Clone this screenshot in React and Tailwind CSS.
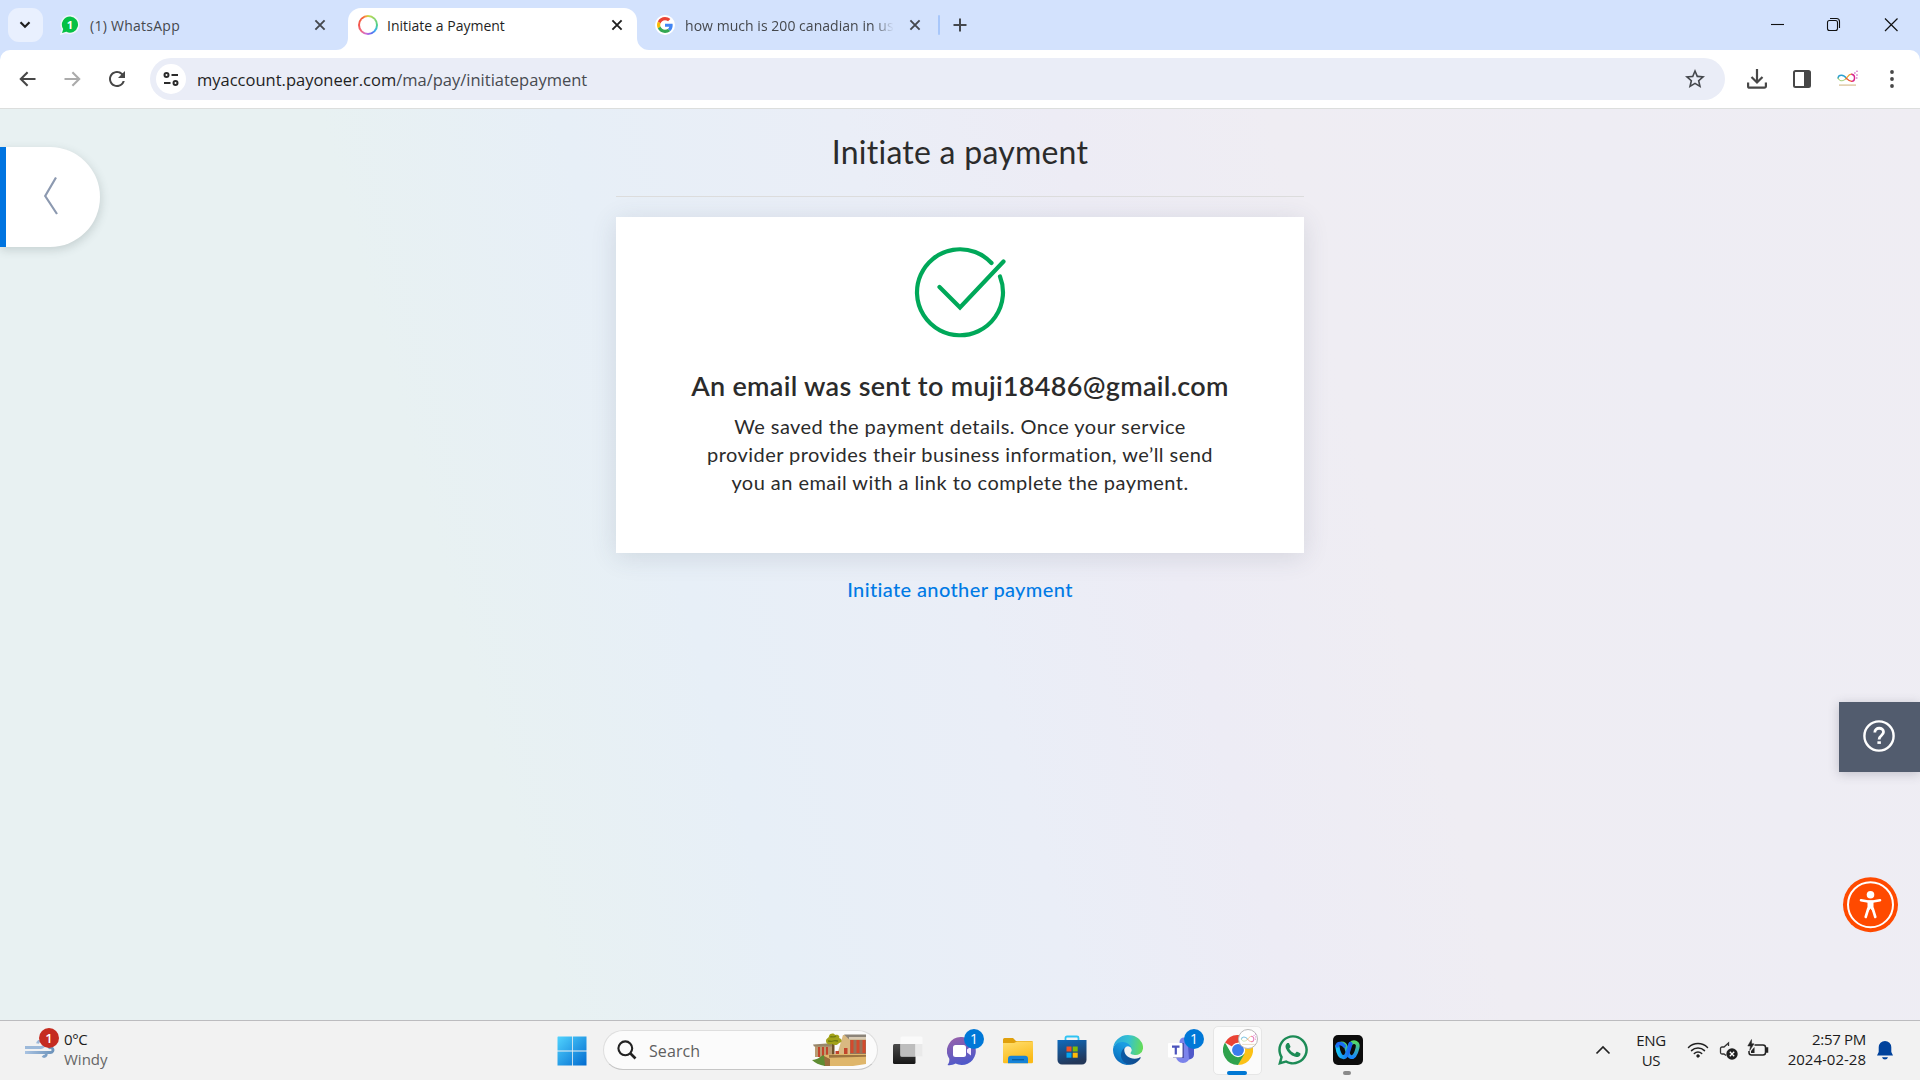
import React from "react";
import { MdRefresh, MdStarBorder } from "react-icons/md";
import { FaWhatsapp } from "react-icons/fa";

function CloseIcon({ className }) {
  return (
    <svg viewBox="0 0 12 12" className={"h-3 w-3 shrink-0 " + className} fill="none" stroke="currentColor" strokeWidth="1.900">
      <path d="M1.400 1.400 10.600 10.600M10.600 1.400 1.400 10.600" />
    </svg>
  );
}

function GoogleG({ className }) {
  return (
    <svg viewBox="0 0 48 48" className={className}>
      <path fill="#ea4335" d="M24 9.5c3.5 0 6.700 1.200 9.200 3.600l6.900-6.900C35.900 2.400 30.500 0 24 0 14.600 0 6.500 5.400 2.600 13.200l8 6.200C12.400 13.700 17.700 9.500 24 9.500z" />
      <path fill="#4285f4" d="M47 24.500c0-1.600-.2-3.100-.4-4.500H24v9h12.900c-.6 3-2.300 5.500-4.800 7.200l7.700 6C44.400 38 47 31.800 47 24.500z" />
      <path fill="#fbbc05" d="M10.500 28.600c-.5-1.500-.8-3-.8-4.600s.3-3.100.8-4.600l-8-6.200C.9 16.500 0 20.100 0 24s.9 7.500 2.600 10.800z" />
      <path fill="#34a853" d="M24 48c6.500 0 11.900-2.100 15.900-5.800l-7.700-6c-2.200 1.500-4.900 2.300-8.200 2.300-6.300 0-11.600-4.200-13.500-9.900l-8 6.200C6.500 42.600 14.600 48 24 48z" />
    </svg>
  );
}

function InfinityMark({ className }) {
  return (
    <svg viewBox="0 0 24 18" className={className} fill="none" strokeLinecap="round">
      <path d="M11 9C8 4.500 2.500 4.500 2 8.500" stroke="#2a9fd0" strokeWidth="1.500" />
      <path d="M2 8.500c1 4 5.500 3.500 8 1" stroke="#8fc45a" strokeWidth="1" />
      <path d="M10 9.500c2-2 3.500-5.500 6.500-5" stroke="#f0a030" strokeWidth="1.300" />
      <path d="M16.500 4.500c4.500 1 3.500 7.500 0 7.500" stroke="#d8248e" strokeWidth="1.500" />
      <path d="M16.500 12C14 12 13 11 11 9" stroke="#ee5535" strokeWidth="1.200" />
      <path d="M19.800 3.200h.1M22 1.400h.1M22 5.300h.1M21.800 8.500h.1" stroke="#c94bb8" strokeWidth="1.500" />
      <path d="M3 16h18" stroke="#dfcca8" strokeWidth="1.600" strokeLinecap="butt" />
    </svg>
  );
}

function TabStrip() {
  return (
    <div className="flex h-[50px] w-full bg-[#d3e2fd] text-sm leading-5 text-[#45484d]">
      <div className="mt-2 ml-2 flex h-[34px] w-[35px] items-center justify-center rounded-[11px] bg-[#e9f0fe] text-[#1f1f1f]">
        <svg viewBox="0 0 12 8" className="mr-px h-2 w-3" fill="none" stroke="currentColor" strokeWidth="2.200">
          <path d="m1.500 1.300 4.500 4.500 4.500-4.500" />
        </svg>
      </div>
      <div className="flex h-[50px] w-[305px] items-center pl-[17px]">
        <div className="relative flex h-5 w-5 items-center justify-center text-[11px] font-bold text-white">
          <svg viewBox="0 0 20 20" className="absolute inset-0 h-5 w-5">
            <path d="M10.300.8a8.800 8.800 0 1 1-4.200 16.700L.9 19.200l1.500-5A8.900 8.900 0 0 1 10.300.8z" fill="#05c144" stroke="#eef6fb" strokeWidth="1.500" />
          </svg>
          <span className="relative leading-5">1</span>
        </div>
        <span className="mt-px ml-[10px] w-[224px] tracking-[0.26px]">(1) WhatsApp</span>
        <CloseIcon className="text-[#45484d]" />
      </div>
      <div className="relative mt-2 flex h-[42px] w-[289px] items-center rounded-t-[13px] bg-white pl-[10px] text-[#1f1f1f]">
        <svg viewBox="0 0 12 12" className="absolute bottom-0 -left-3 h-3 w-3" fill="#fff"><path d="M12 0v12H0A12 12 0 0 0 12 0z" /></svg>
        <svg viewBox="0 0 12 12" className="absolute -right-3 bottom-0 h-3 w-3" fill="#fff"><path d="M0 0v12h12A12 12 0 0 1 0 0z" /></svg>
        <div className="-mt-2 h-5 w-5 shrink-0 rounded-full bg-[conic-gradient(#c9d94a,#4fd08c_25%,#3bb0f0_35%,#5a6cf0_43%,#c66be0_52%,#ef6a86_63%,#f4564d_75%,#f5603a_90%,#f5a33c_97%,#c9d94a)] p-[2px]">
          <div className="h-4 w-4 rounded-full bg-white" />
        </div>
        <span className="-mt-[7px] ml-[9px] w-[224px]">Initiate a Payment</span>
        <CloseIcon className="-mt-2" />
      </div>
      <div className="flex h-[50px] w-[303px] items-center pl-[18px]">
        <div className="flex h-5 w-5 shrink-0 items-center justify-center rounded-full bg-white">
          <GoogleG className="h-4 w-4" />
        </div>
        <span className="mt-px ml-[10px] w-[210px] overflow-hidden mask-r-from-90% mask-r-to-100% tracking-[0.04px] whitespace-nowrap">how much is 200 canadian in us</span>
        <CloseIcon className="ml-[15px]" />
        <div className="ml-[17px] h-5 w-[2px] shrink-0 rounded bg-[#a8c7fa]" />
      </div>
      <div className="flex h-[50px] flex-1 items-center pl-[13px]">
        <svg viewBox="0 0 14 14" className="h-[14px] w-[14px]" fill="none" stroke="currentColor" strokeWidth="2"><path d="M7 .5v13M.5 7h13" /></svg>
      </div>
      <svg viewBox="0 0 150 50" className="h-[50px] w-[150px]" fill="none" stroke="#111" strokeWidth="1">
        <path d="M1 24.500h13" strokeWidth="1.100" />
        <rect x="57.500" y="20.500" width="10" height="10" rx="2" strokeWidth="1.100" />
        <path d="M60 18.500h6.500a3 3 0 0 1 3 3V28" strokeWidth="1.100" />
        <path d="m115 18.500 12.500 12.500M127.500 18.500 115 31" strokeWidth="1.200" />
      </svg>
    </div>
  );
}

function Toolbar() {
  return (
    <div className="w-full bg-[#d3e2fd]">
      <div className="flex h-[59px] w-full rounded-t-[10px] border-b border-[#dcdedd] bg-white">
        <div className="flex h-[58px] w-[150px] items-center pl-[19px]">
          <svg viewBox="0 0 18 18" className="h-[18px] w-[18px]" fill="none" stroke="#474747" strokeWidth="2.100"><path d="M16.500 9H2.200M8.600 2.200 1.800 9l6.800 6.800" /></svg>
          <svg viewBox="0 0 18 18" className="ml-[26px] h-[18px] w-[18px]" fill="none" stroke="#ababab" strokeWidth="2.100"><path d="M1.500 9h14.300M9.400 2.200 16.200 9l-6.800 6.800" /></svg>
          <MdRefresh className="ml-[24px] h-6 w-6 text-[#474747]" />
        </div>
        <div className="mt-2 flex h-[42px] w-[1575px] items-center rounded-full bg-[#eaedf7] pl-[6px]">
          <div className="flex h-[30px] w-[30px] items-center justify-center rounded-full bg-white">
            <svg viewBox="0 0 18 14" className="h-[14px] w-[18px]" fill="none" stroke="#2b2b2b" strokeWidth="2">
              <circle cx="4.500" cy="3" r="2" /><path d="M9.500 3H16M2 11h6.500" /><circle cx="13.500" cy="11" r="2" />
            </svg>
          </div>
          <div className="mt-px ml-[11px] flex-1 text-[16.500px] leading-6 text-[#1f1f1f]">myaccount.payoneer.com<span className="text-[#474a50]">/ma/pay/initiatepayment</span></div>
          <MdStarBorder className="mr-[18px] h-6 w-6 text-[#45484d]" />
        </div>
        <div className="flex h-[58px] flex-1 items-center pl-[22px]">
          <svg viewBox="0 0 20 20" className="h-5 w-5" fill="none" stroke="#474747" strokeWidth="2.200"><path d="M10 0v13M4.500 8l5.500 5.500L15.500 8M1.100 13.500v3.700a1.500 1.500 0 0 0 1.500 1.500h14.800a1.500 1.500 0 0 0 1.500-1.500v-3.700" /></svg>
          <svg viewBox="0 0 18 18" className="ml-[26px] h-[18px] w-[18px]"><rect x="1" y="1" width="16" height="16" rx="1.500" fill="none" stroke="#474747" strokeWidth="2" /><path d="M11 1h6v16h-6z" fill="#474747" /></svg>
          <InfinityMark className="mt-[-2px] ml-[25px] h-[17px] w-[23px]" />
          <svg viewBox="0 0 4 18" className="ml-[31px] h-[18px] w-1" fill="#474747"><circle cx="2" cy="2" r="1.900" /><circle cx="2" cy="9" r="1.900" /><circle cx="2" cy="16" r="1.900" /></svg>
        </div>
      </div>
    </div>
  );
}

function PaymentPage() {
  return (
    <main className="relative flex h-[911px] w-full flex-col items-center bg-[linear-gradient(75deg,#e8f1f2_0%,#e8f1f2_26%,#e7eff7_37%,#eaeef7_50%,#edecf5_60%,#efedf3_70%,#eeedf4_85%,#efedf3_100%)] font-['Lato',sans-serif] text-[#2b2b2b]">
      <h1 className="mt-[23px] h-10 text-[32px] leading-10 tracking-[0.25px]">Initiate a payment</h1>
      <div className="mt-[24px] h-px w-[688px] bg-[#dcdcdc]" />
      <section className="mt-5 flex h-[336px] w-[688px] flex-col items-center bg-white pt-[30px] text-center shadow-[0_4px_24px_rgba(60,70,90,0.14)]">
        <svg viewBox="914 246 92 92" className="h-[92px] w-[92px]" fill="none" stroke="#00a859" strokeWidth="4.200" strokeLinecap="round">
          <path d="M991.500 262A43 43 0 1 0 1000 275.500" />
          <path d="M939.500 286 960 306.500 1003.500 260.500" />
        </svg>
        <h2 className="mt-[30px] h-[34px] text-[27px] leading-[34px] font-semibold tracking-[0.31px] whitespace-nowrap">An email was sent to muji18486@gmail.com</h2>
        <p className="mt-[9px] text-xl leading-7 tracking-[0.45px] whitespace-nowrap">
          We saved the payment details. Once your service<br />provider provides their business information, we’ll send<br />you an email with a link to complete the payment.
        </p>
      </section>
      <a className="mt-[22px] text-xl leading-7 font-medium tracking-[0.38px] text-[#007ae5]">Initiate another payment</a>

      <div className="absolute top-[38px] left-0 flex h-[100px] w-[100px] items-center rounded-r-full border-l-[6px] border-[#0074e0] bg-white pl-[37px] shadow-[1px_3px_10px_rgba(60,80,80,0.2)]">
        <svg viewBox="0 0 16 40" className="-mt-0.5 h-10 w-4" fill="none" stroke="#8c99b0" strokeWidth="2.200"><path d="M13 1.500 2.200 20 14 38" /></svg>
      </div>
      <div className="absolute top-[593px] right-0 flex h-[70px] w-[81px] items-center justify-center bg-[#525c6e] pr-px shadow-[0_2px_10px_rgba(60,60,80,0.25)]">
        <svg viewBox="0 0 34 34" className="-mt-[2px] h-[34px] w-[34px]" fill="none" stroke="#fff">
          <circle cx="17" cy="17" r="14.600" strokeWidth="2.400" />
          <path d="M12.800 13.500c0-5.700 8.700-5.500 8.700-.4 0 3.600-4.400 3.200-4.400 7.400" strokeWidth="2.800" />
          <path d="M15.400 22.300h3.500v2.600h-3.500z" fill="#fff" stroke="none" />
        </svg>
      </div>
      <svg viewBox="0 0 56 56" className="absolute top-[768px] left-[1842px] h-14 w-14">
        <circle cx="28.500" cy="27.700" r="27.500" fill="#ff4a00" />
        <circle cx="28.500" cy="27.700" r="22.500" fill="none" stroke="#fff" strokeWidth="2" />
        <circle cx="28.500" cy="17.800" r="3.800" fill="#fff" />
        <path d="M19 23.300l7 1.200h5l7-1.200M26.300 31.500l-2.600 8.500M30.700 31.500l2.600 8.500" stroke="#fff" strokeWidth="2.600" strokeLinecap="round" fill="none" />
        <path d="M25.500 23.600h6v7l-.4 4.400-2.600-3.500-2.600 3.500-.4-4.400z" fill="#fff" />
      </svg>
    </main>
  );
}

function Badge() {
  return (
    <span className="absolute top-[8px] left-[29px] flex h-5 w-5 items-center justify-center rounded-full bg-[#0078d7] text-[14px] text-white">1</span>
  );
}

function Slot({ children, active }) {
  return (
    <div className="relative flex h-[59px] w-[55px] items-center justify-center">
      {active && <div className="absolute top-[5px] left-[3px] h-[49px] w-[49px] rounded-[5px] border border-[#e6e6e6] bg-[#fbfbfb]" />}
      {children}
    </div>
  );
}

function Temple() {
  return (
    <svg viewBox="0 0 56 34" className="h-[34px] w-14">
      <path d="M4 13h17v11H4z" fill="#b99c72" /><path d="M2 11.500 22 10v3.500H3z" fill="#97866a" />
      <path d="M7 14h2v10H7zM11 14h2v10h-2zM15 14h2v10h-2z" fill="#c2452b" />
      <path d="M21 8h2.500v17H21z" fill="#70512a" />
      <path d="M32 2h23v20H26z" fill="#d9b981" /><path d="M33 1.500h22v4.800H38z" fill="#8b8378" /><path d="M38 4h17v2.500H38z" fill="#d8cbb5" />
      <path d="M15 8c0-3 3-3 3-5 1-3 5-3 6-1 4-1 5 2 4 3 4 1 3 5 0 5-2 3-5 2-7 1-3 1-6 0-6-3z" fill="#a2a218" />
      <path d="M17 8c2 0 3 1 5 0s3 0 5 0M19 4c2-1 4 1 6-1" stroke="#6f7b13" strokeWidth="1.300" fill="none" />
      <path d="M39 7h16v14H39z" fill="#97745a" />
      <path d="M39.500 7h3v13h-3zM45.500 7h3v13h-3zM51.500 7h3v13h-3z" fill="#d34a2d" />
      <path d="M33 15h3.500v6H33zM24.500 18H28v4h-3.500z" fill="#c2452b" />
      <path d="M13 22l12-1h30v10l-13 2H13z" fill="#dfb66b" /><path d="M18 22h37v1.800l-37 1z" fill="#9c7440" />
      <path d="M13 33V23l6 3v7z" fill="#9a6c3c" />
      <path d="M1 27c6 0 8-4 12-5l1 11C8 32 4 30 1 27z" fill="#5f8c33" />
    </svg>
  );
}

function Taskbar() {
  return (
    <footer className="flex h-[60px] w-full border-t border-[#bcbcbf] bg-[#f2f2f2] text-[15px] leading-5">
      <div className="flex w-[544px] pl-6">
        <div className="relative mt-[7px] h-9 w-[40px]">
          <svg viewBox="0 0 30 18" className="absolute top-[12px] left-px h-[18px] w-[30px]" fill="none" strokeWidth="2.800">
            <defs><linearGradient id="wind" gradientUnits="userSpaceOnUse" x1="0" y1="0" x2="30" y2="0"><stop stopColor="#a9c3e2" /><stop offset="1" stopColor="#6990b8" /></linearGradient></defs>
            <path d="M0 7.500h16a3.500 3.500 0 1 0-3.500-4" stroke="#9cb9da" />
            <path d="M0 12.500h25.500a2.500 2.500 0 1 0-2-4M15 12.500h4.500a2 2 0 1 1-1.800 3.300" stroke="url(#wind)" />
          </svg>
          <span className="absolute top-0 left-[15px] flex h-5 w-5 items-center justify-center rounded-full bg-[#c52b20] text-[13px] font-semibold text-white">1</span>
        </div>
        <div className="mt-2 text-[#1c1c1c]"><div className="tracking-[-0.4px]">0°C</div><div className="text-[#666]">Windy</div></div>
      </div>
      <Slot>
        <svg viewBox="0 0 30 30" className="h-[30px] w-[30px]">
          <defs><linearGradient id="win" gradientUnits="userSpaceOnUse" x1="0" y1="0" x2="30" y2="30"><stop stopColor="#52d5ff" /><stop offset="1" stopColor="#0069cf" /></linearGradient></defs>
          <path d="M1 .5h14v14H.5V1zM15.800.5H29.500v14H15.800zM.5 15.400H15v14H.5zM15.800 15.400h13.700v14H15.800z" fill="url(#win)" />
        </svg>
      </Slot>
      <div className="mt-[9px] ml-[4px] flex h-10 w-[275px] items-center rounded-full border border-[#dedede] border-b-[#c6c6c6] bg-[#fbfbfb] pl-[13px]">
        <svg viewBox="0 0 20 20" className="h-5 w-5" fill="none" stroke="#222" strokeWidth="2.100"><circle cx="8.300" cy="8.300" r="6.900" /><path d="m13 13 5.500 5.500" strokeWidth="2.600" /></svg>
        <span className="mt-px ml-[12px] flex-1 text-base leading-6 tracking-[0.1px] text-[#5f5f5f]">Search</span>
        <Temple />
        <div className="w-[10px]" />
      </div>
      <div className="flex pl-[2px]">
        <Slot>
          <svg viewBox="0 0 30 30" className="h-[30px] w-[30px]">
            <defs><linearGradient id="tv" y2="1" x2="0"><stop stopColor="#4b4b4b" /><stop offset="1" stopColor="#171717" /></linearGradient></defs>
            <rect x="0" y="8" width="22.500" height="20" rx="1.500" fill="url(#tv)" />
            <rect x="7.500" y=".5" width="22" height="20" rx="1.500" fill="#fafafa" /><path d="M7.500 8h15v12.500h-15z" fill="#bdbdbd" />
            <path d="M22.500 8h7v12.500h-7z" fill="#e9e9e9" />
          </svg>
        </Slot>
        <Slot>
          <svg viewBox="0 0 30 30" className="-ml-px h-[30px] w-[30px]">
            <defs><linearGradient id="chat" y2="1" x2=".3"><stop stopColor="#9b61a8" /><stop offset="1" stopColor="#5059c9" /></linearGradient></defs>
            <path d="M15 1a14 14 0 1 1-6.500 26.500C6 29 3 29.500.5 29c1.500-2 2-4 1.800-6.300A14 14 0 0 1 15 1z" fill="url(#chat)" />
            <rect x="6" y="9" width="13" height="12" rx="2.500" fill="#fff" /><path d="m20 13.500 4-3v9l-4-3z" fill="#f3e8ff" />
          </svg>
          <Badge />
        </Slot>
        <Slot>
          <svg viewBox="0 0 30 30" className="-mt-px h-[30px] w-[30px]">
            <defs><linearGradient id="fold" y2="1" x2=".4"><stop stopColor="#ffdf70" /><stop offset="1" stopColor="#fbba17" /></linearGradient></defs>
            <path d="M0 4.500A1.500 1.500 0 0 1 1.500 3H10l3 3h15.500A1.500 1.500 0 0 1 30 7.500V12H0z" fill="#e0a00c" />
            <path d="M0 8h11l3-1.500h16V27a1.300 1.300 0 0 1-1.300 1.300H1.300A1.300 1.300 0 0 1 0 27z" fill="url(#fold)" />
            <path d="M5 28.300v-4.500a3 3 0 0 1 3-3h14a3 3 0 0 1 3 3v4.500z" fill="#1683d8" /><path d="M9 24.700h12" stroke="#075d9f" strokeWidth="1.300" />
          </svg>
        </Slot>
        <Slot>
          <svg viewBox="0 0 30 30" className="-mt-px -ml-px h-[30px] w-[30px]">
            <defs><linearGradient id="store" y2="1" x2=".3"><stop stopColor="#0f6bbd" /><stop offset="1" stopColor="#233759" /></linearGradient></defs>
            <path d="M8.500 7V3a1.500 1.500 0 0 1 1.500-1.500h10A1.500 1.500 0 0 1 21.500 3v4" fill="none" stroke="#2fc3f3" strokeWidth="1.800" />
            <path d="M.5 5h29v20a4.500 4.500 0 0 1-4.500 4.500H5A4.500 4.500 0 0 1 .5 25z" fill="url(#store)" />
            <path d="M9.500 11.500h5v5h-5z" fill="#f35325" /><path d="M15.700 11.500h5v5h-5z" fill="#81bc06" /><path d="M9.500 17.700h5v5h-5z" fill="#05a6f0" /><path d="M15.700 17.700h5v5h-5z" fill="#ffba08" />
          </svg>
        </Slot>
        <Slot>
          <svg viewBox="0 0 256 256" className="-mt-px h-[30px] w-[30px]">
            <defs>
              <linearGradient id="e1" x1=".1" y1=".7" x2="1" y2=".7"><stop stopColor="#0c59a4" /><stop offset="1" stopColor="#114a8b" /></linearGradient>
              <linearGradient id="e2" x1=".6" y1=".2" x2=".2" y2="1"><stop stopColor="#1b9de2" /><stop offset=".6" stopColor="#0e7dc9" /><stop offset="1" stopColor="#0b5bb0" /></linearGradient>
              <linearGradient id="e3" x1="0" y1=".4" x2="1" y2=".5"><stop stopColor="#2aa7dc" /><stop offset=".5" stopColor="#35c1d2" /><stop offset="1" stopColor="#66dd55" /></linearGradient>
            </defs>
            <path fill="url(#e1)" d="M231 190.500c-3.400 1.800-6.900 3.400-10.500 4.700a101 101 0 0 1-35.900 6.400c-47.300 0-88.500-32.500-88.500-74.300.1-11.400 6.400-21.800 16.400-27.300-42.800 1.800-53.800 46.400-53.800 72.500 0 73.900 68.100 81.400 82.800 81.400 7.900 0 19.800-2.300 27-4.600l1.300-.4a128 128 0 0 0 66.600-52.800 4 4 0 0 0-5.400-5.600z" />
            <path fill="url(#e2)" d="M105.700 241.400a79 79 0 0 1-22.700-21.300 80.700 80.700 0 0 1 29.500-120.100c3.200-1.500 8.400-4.100 15.500-4a32 32 0 0 1 25.700 13 31.900 31.900 0 0 1 6.300 18.700c0-.2 24.500-79.600-80-79.600-43.900 0-80 41.700-80 78.200-.2 19.300 4 38.400 12.100 56a128 128 0 0 0 156.400 67.100 75.600 75.600 0 0 1-62.800-8z" />
            <path fill="url(#e3)" d="M152.300 148.900c-.9 1-3.400 2.500-3.400 5.600 0 2.600 1.700 5.200 4.800 7.300 14.400 10.100 41.700 8.700 41.800 8.700 10.700 0 21.200-2.900 30.500-8.400a61.900 61.900 0 0 0 30.400-53.300c.3-22.400-8-37.300-11.300-43.900C223.900 23.300 177.700 0 127.400 0A128 128 0 0 0 0 126.200c.5-36.500 36.800-66 80-66 3.500 0 23.500.3 42 10.100 16.300 8.600 24.900 18.900 30.800 29.200 6.200 10.700 7.300 24.100 7.300 29.500s-2.700 13.300-7.800 19.900z" />
          </svg>
        </Slot>
        <Slot>
          <svg viewBox="0 0 30 30" className="-mt-[2px] h-[30px] w-[30px]">
            <circle cx="16" cy="7" r="4.500" fill="#7b83eb" /><path d="M8 11h14v10a7 7 0 0 1-14 0z" fill="#7b83eb" /><path d="M20 11h6v8.500a5 5 0 0 1-5 5z" fill="#5059c9" />
            <path d="M5 8h11v15H5z" fill="#3e3f8a" opacity=".7" /><rect x="0" y="8" width="14.500" height="14.500" rx="1" fill="#fff" />
            <path d="M4 11.700h7.500M7.800 11.500v8" stroke="#4b53bc" strokeWidth="2.200" />
          </svg>
          <Badge />
        </Slot>
        <Slot active>
          <svg viewBox="0 0 48 48" className="relative -mt-px h-[30px] w-[30px]">
            <path d="M24 24 3.200 12A24 24 0 0 1 44.800 12H24z" fill="#ea4335" />
            <path d="M24 24h10.400L24 48A24 24 0 0 0 44.800 12H24z" fill="#fbc116" />
            <path d="M3.200 12A24 24 0 0 0 24 48l10.400-18L24 24l-10.400 6z" fill="#2fa24c" />
            <circle cx="24" cy="24" r="11.500" fill="#fff" /><circle cx="24" cy="24" r="9.500" fill="#3b7ded" />
          </svg>
          <div className="absolute top-[8px] left-[28px] flex h-5 w-5 items-center justify-center rounded-full border border-[#b9b9b9] bg-white"><InfinityMark className="h-[13px] w-[17px] opacity-60" /></div>
          <div className="absolute bottom-[5px] left-[17px] h-1 w-5 rounded-full bg-[#0078d4]" />
        </Slot>
        <Slot><FaWhatsapp className="-mt-px h-[34px] w-[34px] text-[#1c8b56]" /></Slot>
        <Slot>
          <svg viewBox="0 0 30 30" className="-mt-px h-[30px] w-[30px]" fill="none" strokeLinecap="round">
            <defs><linearGradient id="wx1" x2="1"><stop stopColor="#16c4f5" /><stop offset="1" stopColor="#1a5df2" /></linearGradient><linearGradient id="wx2" y2="1" x2="0"><stop stopColor="#53d769" /><stop offset="1" stopColor="#1787ff" /></linearGradient></defs>
            <rect width="30" height="30" rx="5" fill="#0c0c0c" />
            <path d="M17.500 9c3.500-3.500 8.500-1.500 7 4-1.300 5.500-3.500 9.500-6.500 9.200-3-.4-3.500-5.700-5-10.200-.8-2.500-3-3.500-4.500-3.500" stroke="url(#wx2)" strokeWidth="3.800" />
            <path d="M4.300 11c.7 6 3 11.200 6.200 11.200 3.800 0 4.700-7 7-13.200" stroke="url(#wx1)" strokeWidth="4.200" />
            <path d="M4.300 11c.2-3.500 5-3 7 0" stroke="#1b6cf5" strokeWidth="3.400" />
          </svg>
          <div className="absolute bottom-[5px] left-[23px] h-1 w-2 rounded-full bg-[#8a8a8a]" />
        </Slot>
      </div>
      <div className="flex flex-1 justify-end text-[#1c1c1c]">
        <svg viewBox="0 0 16 10" className="mt-[24px] h-[10px] w-4" fill="none" stroke="#222" strokeWidth="1.700"><path d="m1.500 8.500 6.500-6.500 6.500 6.500" /></svg>
        <div className="mt-[9px] ml-[21px] w-[38px] text-center tracking-[-0.4px]"><div>ENG</div><div>US</div></div>
        <svg viewBox="0 0 22 18" className="mt-[20px] ml-[17px] h-[18px] w-[22px]" fill="none" stroke="#222" strokeWidth="1.500" strokeLinecap="round">
          <path d="M1.500 6.500a13.500 13.500 0 0 1 19 0M4.500 9.600a9.300 9.300 0 0 1 13 0M7.300 12.500a5.300 5.300 0 0 1 7.400 0" /><circle cx="11" cy="15" r="1.400" fill="#222" strokeWidth=".5" />
        </svg>
        <svg viewBox="0 0 20 20" className="mt-[20px] ml-[10px] h-5 w-5" fill="none" stroke="#333" strokeWidth="1.300">
          <path d="M9.500 5V2L5 6H3a1.500 1.500 0 0 0-1.500 1.500v4A1.500 1.500 0 0 0 3 13h2l2 1.500" /><circle cx="13" cy="13" r="5.700" fill="#1f1f1f" stroke="none" /><path d="m10.800 10.800 4.400 4.400M15.200 10.800l-4.400 4.400" stroke="#fff" />
        </svg>
        <svg viewBox="0 0 22 18" className="mt-[18px] ml-[8px] h-[18px] w-[22px]" fill="none" stroke="#222" strokeWidth="1.500">
          <path d="M7.500 6H16a2.500 2.500 0 0 1 2.500 2.500v5A2.500 2.500 0 0 1 16 16H4.500A2.500 2.500 0 0 1 2 13.500V12" /><path d="M19 9h1.500v4H19z" fill="#222" stroke="#222" /><path d="M4.500.5.800 7h2.700L2.700 11.500 7 4.800H4.600z" fill="#222" strokeWidth=".5" /><path d="M4 14V12l3.500-4v6z" fill="#222" stroke="none" />
        </svg>
        <div className="mt-2 ml-[15px] w-[82px] text-right"><div className="tracking-[-0.3px]">2:57 PM</div><div>2024-02-28</div></div>
        <svg viewBox="0 0 16 20" className="mt-[20px] mr-[27px] ml-[11px] h-5 w-4" fill="#00429c"><path d="M8 0a6.300 6.300 0 0 1 6.300 6.300V11l1.700 3.500H0L1.700 11V6.300A6.300 6.300 0 0 1 8 0zM5 16.200h6a3.100 3.100 0 0 1-6 0z" /></svg>
      </div>
    </footer>
  );
}

export default function App() {
  return (
    <div className="flex h-[1080px] w-[1920px] flex-col overflow-hidden bg-white font-['Open_Sans',sans-serif]">
      <TabStrip />
      <Toolbar />
      <PaymentPage />
      <Taskbar />
    </div>
  );
}
